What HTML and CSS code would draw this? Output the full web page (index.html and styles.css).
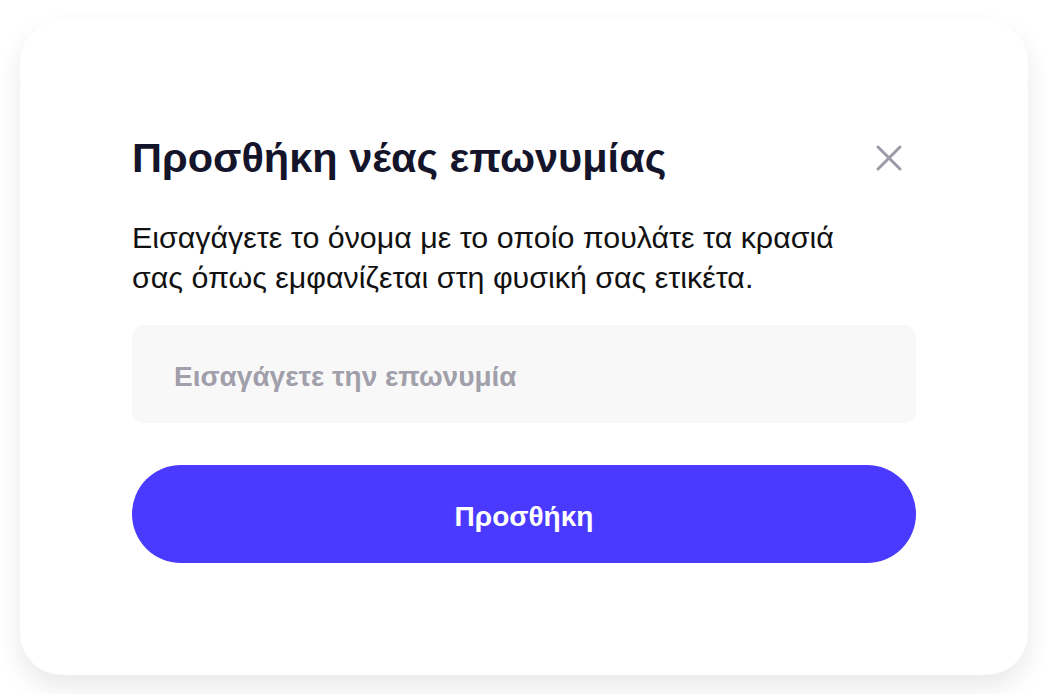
FILE: index.html
```html
<!DOCTYPE html>
<html lang="el">
<head>
    <meta charset="UTF-8">
    <meta name="viewport" content="width=device-width, initial-scale=1.0">
    <title>Προσθήκη νέας επωνυμίας</title>
    <link rel="stylesheet" href="styles.css">
</head>
<body>
    <div class="modal">
        <div class="modal-header">
            <h1>Προσθήκη νέας επωνυμίας</h1>
            <button type="button" class="close-button" aria-label="Κλείσιμο">
                <svg width="26" height="26" viewBox="0 0 26 26">
                    <path d="M2 2 L24 24 M24 2 L2 24" stroke="#9b9aa6" stroke-width="3" stroke-linecap="round" fill="none"/>
                </svg>
            </button>
        </div>
        <p class="description">Εισαγάγετε το όνομα με το οποίο πουλάτε τα κρασιά σας όπως εμφανίζεται στη φυσική σας ετικέτα.</p>
        <form class="brand-form">
            <input type="text" class="brand-input" placeholder="Εισαγάγετε την επωνυμία">
            <button type="button" class="submit-button">Προσθήκη</button>
        </form>
    </div>
</body>
</html>
```

FILE: styles.css
```css
body {
    margin: 0;
    padding: 20px;
    background: #ffffff;
    font-family: "Liberation Sans", Arial, sans-serif;
    color: #111111;
}
.modal {
    background: #ffffff;
    border-radius: 42px;
    padding: 112px;
    box-shadow: 0 12px 26px rgba(0, 0, 0, 0.09);
}
.modal-header {
    display: flex;
    align-items: center;
    justify-content: space-between;
}
.modal-header h1 {
    margin: 0;
    font-size: 41.5px;
    line-height: 52px;
    font-weight: bold;
    color: #14142b;
}
.close-button {
    background: none;
    border: none;
    padding: 0;
    margin-right: 14px;
    cursor: pointer;
    display: flex;
}
.description {
    margin: 33px 0 0;
    max-width: 730px;
    font-size: 30.4px;
    line-height: 40px;
}
.brand-form {
    margin-top: 28px;
    display: flex;
    flex-direction: column;
}
.brand-input {
    height: 98px;
    box-sizing: border-box;
    border: none;
    outline: none;
    border-radius: 12px;
    background: #f8f8f8;
    padding: 6px 42px 0;
    font-family: inherit;
    font-size: 28px;
    font-weight: bold;
    color: #14142b;
}
.brand-input::placeholder {
    color: #a09faa;
}
.submit-button {
    margin-top: 42px;
    height: 98px;
    padding-top: 6px;
    border: none;
    border-radius: 49px;
    background: #4a3aff;
    color: #ffffff;
    font-family: inherit;
    font-size: 28px;
    font-weight: bold;
    cursor: pointer;
}
```
